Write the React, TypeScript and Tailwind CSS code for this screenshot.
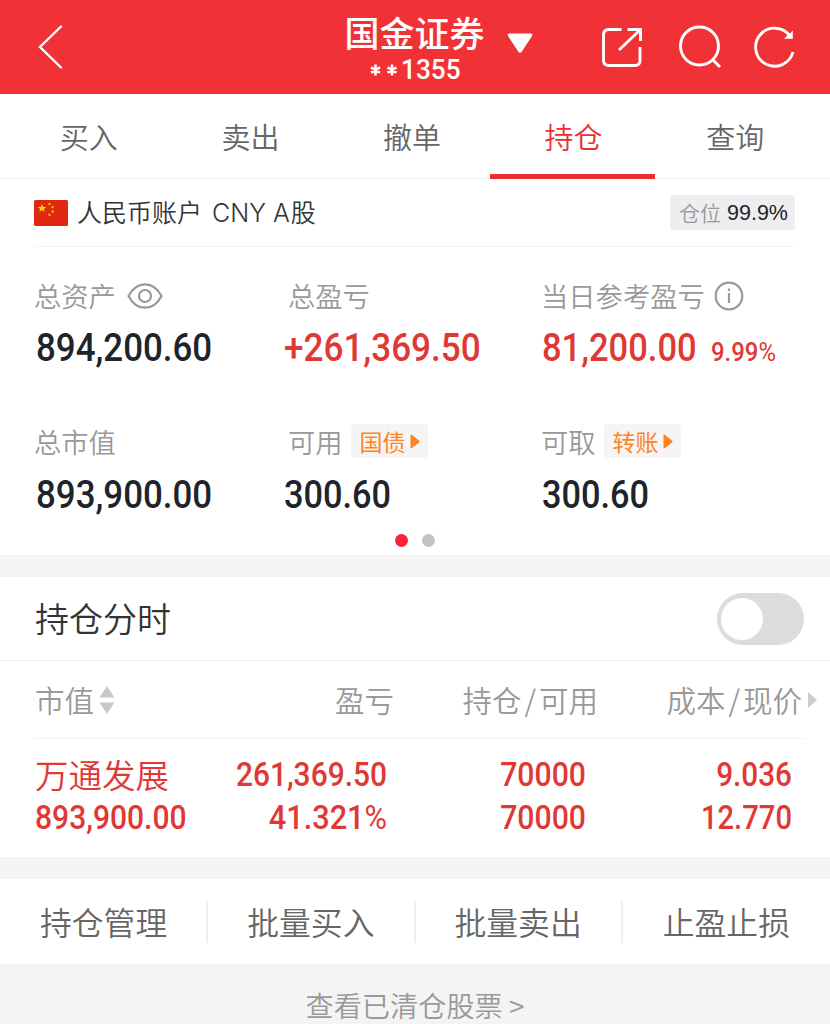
import type { ReactNode } from 'react';
import clsx from 'clsx';

const tabs = ['买入', '卖出', '撤单', '持仓', '查询'];
const actions = ['持仓管理', '批量买入', '批量卖出', '止盈止损'];

// narrow numerals, scaled from the side they are aligned to
function Num({ children, className }: { children: ReactNode; className?: string }) {
  return (
    <span className={clsx("inline-block whitespace-nowrap font-['Roboto',sans-serif] font-medium", className)}>
      {children}
    </span>
  );
}

function Header() {
  return (
    <header className="flex h-[94px] bg-[#f03136] text-white">
      <div className="flex w-[344px] items-center pl-[38px]">
        <svg width="25" height="44" viewBox="0 0 25 44" fill="none" stroke="currentColor" strokeWidth="2.4">
          <path d="M23 1.5 2 22l21 20.5" strokeLinecap="round" />
        </svg>
      </div>
      <div className="flex w-[141px] flex-col items-center">
        <h1 className="mt-[9px] h-[46px] whitespace-nowrap text-[35px] leading-[46px] font-medium">国金证券</h1>
        <div className="flex h-[30px] items-center text-[27px] leading-[30px]">
          <svg width="28" height="12" viewBox="0 0 28 12" stroke="currentColor" strokeWidth="2.6" className="mr-[3px]">
            <path d="M5.5 .5v11M1 3.300l9 5.400M10 3.300l-9 5.400M22 .5v11M17.500 3.300l9 5.400M26.500 3.300l-9 5.400" />
          </svg>
          <Num className="w-[59px] origin-left scale-x-[0.97]">1355</Num>
        </div>
      </div>
      <div className="w-[116px] pt-[33px] pl-[22px]">
        <svg width="26" height="21" viewBox="0 0 26 21" fill="currentColor">
          <path d="M2 .5h22q2 .5 1 2.5L14.500 19q-1.500 1.500-3 0L1 3Q0 1 2 .5z" />
        </svg>
      </div>
      <div className="flex pt-[25px]">
        <svg width="42" height="43" viewBox="0 0 42 43" fill="none" stroke="currentColor" strokeWidth="2.9">
          <path d="M20.500 4.500H8q-5.500 0-5.500 5.500v25.500q0 5 5.500 5h26q5 0 5-5V22" />
          <path d="M26.500 4.500h13V16M39 5 18 25" />
        </svg>
        <svg width="44" height="44" viewBox="0 0 44 44" fill="none" stroke="currentColor" strokeWidth="2.9" className="ml-[35px]">
          <circle cx="21.500" cy="21" r="19" />
          <path d="m34 34 8 8" />
        </svg>
        <svg width="42" height="44" viewBox="0 0 42 44" fill="none" stroke="currentColor" strokeWidth="2.9" className="ml-[31px]">
          <path d="M40 27A19 19 0 1 1 37 11" />
          <path d="M39.800 5.500v8.300H31l3-3 3-2z" fill="currentColor" stroke="none" />
        </svg>
      </div>
    </header>
  );
}

function Tabs() {
  return (
    <nav className="grid h-[85px] grid-cols-5 border-b border-[#eeeeee] pr-[14px] pl-[8px] text-[29px] leading-[84px] text-[#666]">
      {tabs.map((tab) => (
        <a key={tab} className={clsx('relative text-center', tab === '持仓' && 'text-[#e93030]')}>
          {tab}
          {tab === '持仓' && <span className="absolute -right-px -bottom-px -left-[3px] h-[5px] bg-[#e93030]" />}
        </a>
      ))}
    </nav>
  );
}

function Flag() {
  return (
    <svg width="34" height="26" viewBox="0 0 34 26">
      <rect width="34" height="26" rx="1.5" fill="#de2910" />
      <path d="m8 4 1.100 3h3.200L9.800 8.900l1 3.100L8 10.100 5.200 12l1-3.100L3.700 7h3.200z" fill="#ffde00" />
      <g fill="#f5b800">
        <circle cx="15.500" cy="4" r="1.200" />
        <circle cx="18.700" cy="7" r="1.200" />
        <circle cx="18.700" cy="11.500" r="1.200" />
        <circle cx="15.500" cy="14.700" r="1.200" />
      </g>
    </svg>
  );
}

function LinkTag({ children }: { children: ReactNode }) {
  return (
    <a className="ml-[8px] flex h-[34px] w-[77px] items-center rounded bg-[#f5f5f5] pl-[9px] text-[23px] leading-[32px] font-normal text-[#ff8420]">
      {children}
      <svg width="10" height="15" viewBox="0 0 10 15" className="ml-[4px]">
        <path d="M.5 1.500Q.5 0 2 1l7 5.500q1 1 0 2L2 14Q.5 15 .5 13.500z" fill="currentColor" />
      </svg>
    </a>
  );
}

function Account() {
  return (
    <section className="h-[376px] px-[34px]">
      <div className="flex h-[68px] w-[761px] items-center border-b border-[#f3f3f3]">
        <Flag />
        <span className="ml-[9px] text-[25px] text-[#333]">
          人民币账户<span className="mr-[1px] ml-[10px] font-['Inter',sans-serif] font-light">CNY A</span>股
        </span>
        <span className="ml-auto flex h-[35px] w-[125px] items-center rounded-[3px] bg-[#eeeef0] pl-[9px] text-[21px] text-[#999]">
          仓位
          <span className="mt-[2px] ml-[6px] font-['Liberation_Sans',sans-serif] text-[21.5px] text-[#222]">99.9%</span>
        </span>
      </div>

      <div className="grid grid-cols-[253px_253px_1fr] text-[27.3px] text-[#999]">
        <div className="h-[176px] pt-[30px]">
          <div className="flex h-[36px] items-center">
            总资产
            <svg width="36" height="26" viewBox="0 0 36 26" fill="none" stroke="currentColor" strokeWidth="2.2" className="mt-[2px] ml-[11px]">
              <path d="M1.500 13Q7.500 1.300 18 1.300T34.500 13Q28.500 24.700 18 24.700T1.500 13z" />
              <circle cx="18" cy="13" r="6" />
            </svg>
          </div>
          <Num className="mt-[11px] ml-[2px] origin-left scale-x-[0.895] text-[39px] leading-[48px] text-[#20242a]">894,200.60</Num>
        </div>
        <div className="h-[176px] pt-[30px]">
          <div className="flex h-[36px] items-center pl-px">总盈亏</div>
          <Num className="mt-[11px] -ml-[3px] origin-left scale-x-[0.9] text-[39px] leading-[48px] text-[#e03835]">+261,369.50</Num>
        </div>
        <div className="h-[176px] pt-[30px]">
          <div className="flex h-[36px] items-center pl-px">
            当日参考盈亏
            <svg width="30" height="30" viewBox="0 0 30 30" fill="none" stroke="currentColor" strokeWidth="2.2" className="mt-[2px] ml-[9px]">
              <circle cx="15" cy="15" r="13.3" />
              <path d="M15 12v10M15 7.500v2.500" />
            </svg>
          </div>
          <div className="mt-[11px] ml-[2px] flex items-baseline text-[#e03835]">
            <Num className="w-[169px] origin-left scale-x-[0.885] text-[39px] leading-[48px]">81,200.00</Num>
            <Num className="origin-left scale-x-[0.92] text-[26px]">9.99<span className="font-normal">%</span></Num>
          </div>
        </div>

        <div>
          <div className="flex h-[36px] items-center">总市值</div>
          <Num className="mt-[12px] ml-[2px] origin-left scale-x-[0.895] text-[39px] leading-[48px] text-[#20242a]">893,900.00</Num>
        </div>
        <div>
          <div className="flex h-[36px] items-center pl-px">可用<LinkTag>国债</LinkTag></div>
          <Num className="mt-[12px] -ml-[3px] origin-left scale-x-[0.88] text-[39px] leading-[48px] text-[#20242a]">300.60</Num>
        </div>
        <div>
          <div className="flex h-[36px] items-center pl-px">可取<LinkTag>转账</LinkTag></div>
          <Num className="mt-[12px] ml-[2px] origin-left scale-x-[0.88] text-[39px] leading-[48px] text-[#20242a]">300.60</Num>
        </div>
      </div>

      <div className="mt-[15px] flex justify-center gap-[14px]">
        <span className="size-[13px] rounded-full bg-[#ff2137]" />
        <span className="size-[13px] rounded-full bg-[#c2c2c2]" />
      </div>
    </section>
  );
}

function Positions() {
  return (
    <section className="h-[280px]">
      <div className="flex h-[84px] items-center justify-between border-b border-[#f1f1f1] pr-[26px] pl-[35px] text-[34px] text-[#333]">
        <span className="mb-[2px]">持仓分时</span>
        <span className="flex h-[52px] w-[87px] items-center rounded-full bg-[#dcdcdc] pl-[4px]">
          <span className="size-[42px] rounded-full bg-white" />
        </span>
      </div>

      <div className="flex h-[77px] items-center pl-[35px] text-[29.5px] text-[#999]">
        <span className="flex w-[173px] items-center">
          市值
          <svg width="16" height="28" viewBox="0 0 16 28" fill="#c8c8c8" className="ml-[5px]">
            <path d="M8 0l7.500 11.500H.5zM8 28l7.500-11.500H.5z" />
          </svg>
        </span>
        <span className="w-[186px] text-right">盈亏</span>
        <span className="w-[204px] text-right">持仓<span className="mx-[3px]">/</span>可用</span>
        <span className="w-[204px] text-right">成本<span className="mx-[3px]">/</span>现价</span>
        <svg width="9" height="16" viewBox="0 0 9 16" fill="#ccc" className="ml-[6px]">
          <path d="M0 0v16l9-8z" />
        </svg>
      </div>

      <div className="ml-[34px] grid h-[119px] w-[770px] grid-cols-[152px_201px_199px_206px] content-start border-t border-[#f1f1f1] pt-[15px] text-[33px] leading-[42.5px] text-[#e03835]">
        <span className="-mt-px ml-px whitespace-nowrap text-[33.5px]">万通发展</span>
        <Num className="origin-right scale-x-[0.907] text-right">261,369.50</Num>
        <Num className="origin-right scale-x-[0.915] text-right">70000</Num>
        <Num className="origin-right scale-x-[0.9] text-right">9.036</Num>
        <Num className="ml-px origin-left scale-x-[0.91]">893,900.00</Num>
        <Num className="origin-right scale-x-[0.93] text-right">41.321<span className="font-normal">%</span></Num>
        <Num className="origin-right scale-x-[0.915] text-right">70000</Num>
        <Num className="origin-right scale-x-[0.885] text-right">12.770</Num>
      </div>
    </section>
  );
}

export default function App() {
  return (
    <main className="h-[1024px] w-[830px] overflow-hidden bg-white font-['Noto_Sans_CJK_SC',sans-serif] font-[350]">
      <Header />
      <Tabs />
      <Account />
      <div className="h-[22px] bg-[#f4f4f4]" />
      <Positions />
      <div className="h-[22px] bg-[#f4f4f4]" />
      <div className="grid h-[85px] grid-cols-4 items-center pl-px text-center text-[31.8px] text-[#666]">
        {actions.map((action, i) => (
          <a key={action} className={clsx('h-[42px] leading-[40px]', i < 3 && 'border-r-2 border-[#eeeeee]')}>
            {action}
          </a>
        ))}
      </div>
      <footer className="h-[60px] bg-[#f4f4f4] pt-[20px] text-center text-[28.2px] leading-[42px] whitespace-nowrap text-[#999]">
        查看已清仓股票 &gt;
      </footer>
    </main>
  );
}
